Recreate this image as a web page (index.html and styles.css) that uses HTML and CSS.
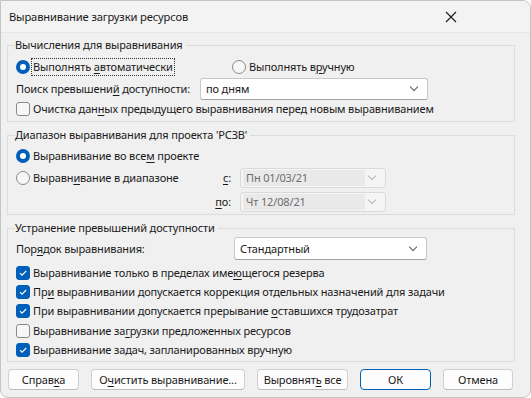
FILE: index.html
```html
<!DOCTYPE html>
<html lang="ru">
<head>
    <meta charset="UTF-8">
    <title>Выравнивание загрузки ресурсов</title>
    <link rel="stylesheet" href="styles.css">
</head>
<body>
    <div class="window">
        <div class="titlebar">
            <span class="title">Выравнивание загрузки ресурсов</span>
            <svg class="close" width="12" height="12" viewBox="0 0 12 12">
                <path d="M1 1 L11 11 M11 1 L1 11" stroke="#1a1a1a" stroke-width="1.1" fill="none"/>
            </svg>
        </div>

        <div class="content">
            <fieldset class="group g1">
                <legend>Вычисления для выравнивания</legend>
                <div class="row row-radio">
                    <div class="opt opt-auto"><span class="radio on"></span><span class="focus">Выполнять <u>а</u>втоматически</span></div>
                    <div class="opt"><span class="radio"></span><span>Выполнять в<u>р</u>учную</span></div>
                </div>
                <div class="row row-select">
                    <span class="label label-search">Поиск превышени<u>й</u> доступности:</span>
                    <div class="select select-days">по дням<span class="chev"></span></div>
                </div>
                <div class="row row-check">
                    <div class="opt"><span class="check"></span><span>Очистка дан<u>н</u>ых предыдущего выравнивания перед новым выравниванием</span></div>
                </div>
            </fieldset>

            <fieldset class="group g2">
                <legend>Диапазон выравнивания для проекта 'РСЗВ'</legend>
                <div class="row row-radio">
                    <div class="opt"><span class="radio on"></span><span>Выравнивание во все<u>м</u> проекте</span></div>
                </div>
                <div class="row row-date first">
                    <div class="opt opt-range"><span class="radio"></span><span>Выравн<u>и</u>вание в диапазоне</span></div>
                    <span class="label label-date"><u>с</u>:</span>
                    <div class="select select-date disabled"><span class="val">Пн 01/03/21</span><span class="chev"></span></div>
                </div>
                <div class="row row-date">
                    <div class="opt opt-range"></div>
                    <span class="label label-date"><u>п</u>о:</span>
                    <div class="select select-date disabled"><span class="val">Чт 12/08/21</span><span class="chev"></span></div>
                </div>
            </fieldset>

            <fieldset class="group g3">
                <legend>Устранение превышений доступности</legend>
                <div class="row row-order">
                    <span class="label label-order">Пор<u>я</u>док выравнивания:</span>
                    <div class="select select-order">Стандартный<span class="chev"></span></div>
                </div>
                <div class="row row-check3">
                    <div class="opt"><span class="check on"></span><span>Выравнивание только в пределах име<u>ю</u>щегося резерва</span></div>
                </div>
                <div class="row row-check3">
                    <div class="opt"><span class="check on"></span><span>Пр<u>и</u> выравнивании допускается коррекция отдельных назначений для задачи</span></div>
                </div>
                <div class="row row-check3">
                    <div class="opt"><span class="check on"></span><span>При выравнивании допускается прерывание <u>о</u>ставшихся трудозатрат</span></div>
                </div>
                <div class="row row-check3">
                    <div class="opt"><span class="check"></span><span>Выравнивание за<u>г</u>рузки предложенных ресурсов</span></div>
                </div>
                <div class="row row-check3">
                    <div class="opt"><span class="check on"></span><span>Выравнивание задач, запланированных вручную</span></div>
                </div>
            </fieldset>

            <div class="buttons">
                <button class="btn btn-help">Справ<u>к</u>а</button>
                <button class="btn btn-clear">О<u>ч</u>истить выравнивание...</button>
                <button class="btn btn-all">Выровнят<u>ь</u> все</button>
                <button class="btn btn-ok default">ОК</button>
                <button class="btn btn-cancel">Отмена</button>
            </div>
        </div>
    </div>
</body>
</html>
```

FILE: styles.css
```css
body {
    margin: 0;
    background-color: #ffffff;
    font-family: "Noto Sans", "Open Sans", sans-serif;
    font-size: 11px;
    letter-spacing: -0.15px;
    color: #1a1a1a;
}

.window {
    width: 529px;
    height: 396px;
    border: 1px solid #c4c4c4;
    border-radius: 0 8px 8px 8px;
    background-color: #f0f0f0;
    overflow: hidden;
}

.titlebar {
    height: 31px;
    display: flex;
    align-items: center;
    justify-content: space-between;
    padding: 0 73px 0 8px;
    background-color: #f3f3f3;
    border-bottom: 1px solid #e6e6e6;
}

.title {
    font-size: 11.2px;
    color: #1a1a1a;
}

.content {
    padding: 4px 0 0 6px;
}

u {
    text-decoration: underline;
    text-underline-offset: 2px;
    text-decoration-thickness: 1px;
}

.group {
    width: 490px;
    margin: 0;
    border: 1px solid #dcdcdc;
    border-radius: 0;
    padding: 5px 8px 3px 8px;
    line-height: 16px;
}

.group legend {
    padding: 0 3px 0 0;
    margin-left: -1px;
    height: 16px;
    line-height: 16px;
}

.g2 {
    margin-top: 5px;
    padding-top: 4px;
    padding-bottom: 2px;
}

.g3 {
    margin-top: 5px;
    padding-top: 1px;
    padding-bottom: 2px;
}

.row {
    display: flex;
    align-items: center;
    white-space: nowrap;
}

.row-radio,
.row-check {
    height: 18px;
}

.row-select {
    height: 22px;
    margin-top: 2px;
}

.row-date {
    height: 20px;
    margin-top: 4px;
}

.row-date.first {
    margin-top: 3px;
}

.row-order {
    height: 23px;
    margin-bottom: 3px;
}

.row-check3 {
    height: 19.3px;
}

.opt {
    display: flex;
    align-items: center;
    white-space: nowrap;
}

.opt-auto {
    width: 216px;
}

.opt-range {
    width: 190px;
}

.focus {
    outline: 1px dotted #333;
    outline-offset: 0;
    padding: 0 1px;
    margin-left: -1px;
}

.radio {
    box-sizing: border-box;
    width: 14px;
    height: 14px;
    border: 1px solid #8a8a8a;
    border-radius: 50%;
    background-color: #f7f7f7;
    margin-right: 3px;
    flex-shrink: 0;
}

.radio.on {
    border: 4px solid #005fb8;
    background-color: #ffffff;
}

.check {
    box-sizing: border-box;
    width: 14px;
    height: 14px;
    border: 1px solid #8a8a8a;
    border-radius: 3px;
    background-color: #f7f7f7;
    margin-right: 3px;
    flex-shrink: 0;
}

.check.on {
    border-color: #005fb8;
    background: #005fb8 url("data:image/svg+xml;utf8,<svg xmlns='http://www.w3.org/2000/svg' width='12' height='12' viewBox='0 0 12 12'><path d='M3 6.2 L5 8.2 L9.2 4' stroke='white' stroke-width='1.1' fill='none'/></svg>") center no-repeat;
}

.label-search {
    width: 184px;
}

.label-date {
    width: 25px;
    text-align: right;
    padding-right: 9px;
}

.label-order {
    width: 218px;
}

.select {
    box-sizing: border-box;
    position: relative;
    display: flex;
    align-items: center;
    background-color: #ffffff;
    border: 1px solid #c8c8c8;
    border-bottom-color: #a0a0a0;
    border-radius: 3px;
    padding-left: 5px;
}

.select-days {
    width: 228px;
    height: 22px;
}

.select-order {
    width: 193px;
    height: 23px;
    padding-left: 5px;
}

.select-date {
    width: 146px;
    height: 20px;
    padding-left: 2px;
}

.select.disabled {
    background-color: #f5f5f5;
    border-color: #d9d9d9;
    color: #6d6d6d;
}

.select.disabled .val {
    background-color: #e9e9e9;
    width: 119px;
    height: 16px;
    line-height: 16px;
    padding-left: 3px;
}

.chev {
    position: absolute;
    right: 10px;
    top: 50%;
    width: 5px;
    height: 5px;
    margin-top: -5px;
    border-right: 1px solid #5a5a5a;
    border-bottom: 1px solid #5a5a5a;
    transform: rotate(45deg);
}

.disabled .chev {
    border-color: #b4b4b4;
}

.buttons {
    display: flex;
    gap: 12px;
    margin-top: 7px;
    padding-left: 1px;
}

.btn {
    box-sizing: border-box;
    height: 21px;
    font-family: inherit;
    font-size: 11px;
    letter-spacing: -0.15px;
    white-space: nowrap;
    color: #1a1a1a;
    background-color: #fdfdfd;
    border: 1px solid #d0d0d0;
    border-bottom-color: #bcbcbc;
    border-radius: 4px;
    padding: 0;
}

.btn-help {
    width: 71px;
}

.btn-clear {
    width: 154px;
}

.btn-all {
    width: 91px;
}

.btn-ok {
    width: 71px;
}

.btn-cancel {
    width: 70px;
}

.btn.default {
    border: 1px solid #005fb8;
}
```
